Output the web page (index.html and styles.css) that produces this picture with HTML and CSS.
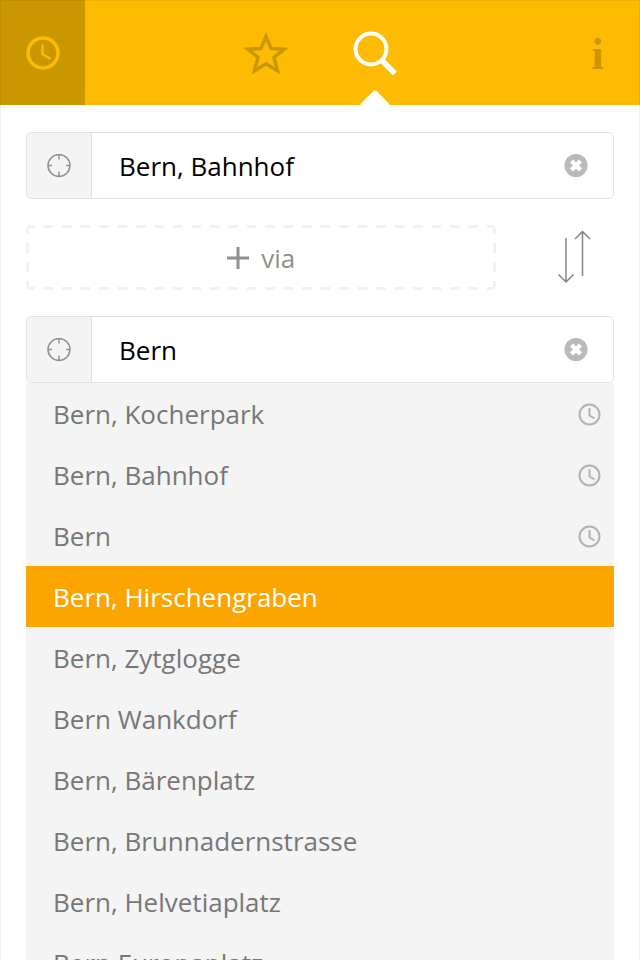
FILE: index.html
```html
<!DOCTYPE html>
<html lang="de">
  <head>
    <meta charset="UTF-8" />
    <meta name="viewport" content="width=device-width, initial-scale=1.0" />
    <title>Fahrplan</title>
    <link rel="stylesheet" href="styles.css">
  </head>
  <body>
    <!-- shared icons -->
    <svg class="sprite" aria-hidden="true">
      <symbol id="locate" viewBox="0 0 24 24">
        <circle cx="12" cy="11.5" r="11" />
        <path d="M12 .5v5M12 17.5v5M1 11.5h4M19 11.5h4" />
      </symbol>
      <symbol id="clear" viewBox="0 0 24 24">
        <circle cx="12" cy="11.5" r="11.5" fill="#b9b9b9" />
        <path d="M7.5 7l9 9M16.5 7l-9 9" stroke="#fff" stroke-width="4.5" />
      </symbol>
      <symbol id="clock" viewBox="0 0 24 24">
        <circle cx="11.5" cy="12.5" r="10" />
        <path d="M11.5 6v7.5l5 3" />
      </symbol>
    </svg>

    <div class="app">
      <nav class="tabs">
        <button class="tab tab-history" type="button" aria-label="Verlauf">
          <svg width="36" height="36" viewBox="0 0 36 36">
            <circle cx="18" cy="18" r="15" stroke-width="3.5" />
            <path d="M17.5 9.5v9.500l8 5" stroke-width="2.5" />
          </svg>
        </button>
        <div class="tabs-main">
          <button class="tab" type="button" aria-label="Favoriten">
            <svg width="46" height="44" viewBox="0 0 46 44">
              <path d="M24 5.500L29 17.5L42 18.2L32 26.3L35.5 39.8L24 32.8L12.500 39.8L16 26.3L6 18.2L19 17.5Z" stroke-width="3.5" />
            </svg>
          </button>
          <button class="tab active" type="button" aria-label="Suche">
            <svg width="44" height="44" viewBox="0 0 44 44">
              <circle cx="18" cy="18" r="15.5" />
              <path d="M28.5 29L42 42.5" stroke-width="5.5" />
            </svg>
          </button>
        </div>
        <button class="tab tab-info" type="button" aria-label="Info">i</button>
      </nav>

      <form class="search">
        <div class="field">
          <button class="locate" type="button" aria-label="Standort als Start">
            <svg class="icon"><use href="#locate" /></svg>
          </button>
          <input type="text" name="from" value="Bern, Bahnhof" aria-label="Von" />
          <button class="clear" type="button" aria-label="Start löschen">
            <svg class="icon"><use href="#clear" /></svg>
          </button>
        </div>

        <div class="via-row">
          <button class="via" type="button">
            <svg width="22" height="22" viewBox="0 0 22 22">
              <path d="M11 0v22M0 11h22" />
            </svg>
            via
          </button>
          <button class="swap" type="button" aria-label="Richtung tauschen">
            <svg width="34" height="54" viewBox="0 0 34 54">
              <path d="M8 7v44M.5 43.5L8 51l7.5-7.5" />
              <path d="M24.5 45V1M17 8L24.5 .5L32 8" />
            </svg>
          </button>
        </div>

        <div class="field">
          <button class="locate" type="button" aria-label="Standort als Ziel">
            <svg class="icon"><use href="#locate" /></svg>
          </button>
          <input type="text" name="to" value="Bern" aria-label="Nach" autocomplete="off" />
          <button class="clear" type="button" aria-label="Ziel löschen">
            <svg class="icon"><use href="#clear" /></svg>
          </button>
        </div>
      </form>

      <ul class="results">
        <li><button type="button">Bern, Kocherpark <svg class="icon"><use href="#clock" /></svg></button></li>
        <li><button type="button">Bern, Bahnhof <svg class="icon"><use href="#clock" /></svg></button></li>
        <li><button type="button">Bern <svg class="icon"><use href="#clock" /></svg></button></li>
        <li><button class="selected" type="button">Bern, Hirschengraben</button></li>
        <li><button type="button">Bern, Zytglogge</button></li>
        <li><button type="button">Bern Wankdorf</button></li>
        <li><button type="button">Bern, Bärenplatz</button></li>
        <li><button type="button">Bern, Brunnadernstrasse</button></li>
        <li><button type="button">Bern, Helvetiaplatz</button></li>
        <li><button type="button">Bern Europaplatz</button></li>
      </ul>
    </div>
  </body>
</html>
```
FILE: styles.css
```css
* {
  box-sizing: border-box;
}
body {
  margin: 0;
  font-family: "Open Sans", "Noto Sans", sans-serif;
  font-size: 26px;
  background: #fff;
}
button,
input {
  margin: 0;
  padding: 0;
  border: none;
  background: none;
  font: inherit;
  color: inherit;
}
button {
  cursor: pointer;
}
svg {
  display: block;
  flex: none;
  fill: none;
  overflow: visible;
}
.sprite {
  position: absolute;
  width: 0;
  height: 0;
}
.icon {
  width: 24px;
  height: 24px;
}
.app {
  position: relative;
  display: flex;
  flex-direction: column;
  height: 100vh;
}
/* hairline frame over everything */
.app::after {
  content: "";
  position: absolute;
  inset: 0;
  border: 1px solid rgba(0, 0, 0, 0.06);
  border-bottom: none;
  pointer-events: none;
}

/* tabs */
.tabs {
  display: grid;
  grid-template-columns: 85px 1fr 85px;
  flex: none;
  height: 105px;
  background: #fdbb04;
  overflow: hidden;
}
.tabs-main {
  display: flex;
  justify-content: center;
}
.tab {
  position: relative;
  display: flex;
  align-items: center;
  justify-content: center;
  color: #c99700;
}
.tab svg {
  stroke: currentColor;
  stroke-width: 4;
}
.tabs-main .tab {
  width: 110px;
}
.tab-history {
  background: #c99700;
  color: #fdbb04;
}
.tab-info {
  padding-top: 4px;
  font-family: "Liberation Serif", serif;
  font-size: 44px;
  font-weight: bold;
}
.tab.active {
  color: #fff;
}
.tab.active::after {
  content: "";
  position: absolute;
  bottom: -11px;
  left: 50%;
  width: 22px;
  height: 22px;
  margin-left: -11px;
  border-radius: 3px;
  background: #fff;
  transform: rotate(45deg);
}

/* search form */
.search {
  display: flex;
  flex-direction: column;
  flex: none;
  gap: 26px;
  padding: 27px 26px 0;
}
.field {
  display: flex;
  height: 67px;
  border: 1px solid #e2e2e2;
  border-radius: 5px;
  overflow: hidden;
}
.locate {
  display: flex;
  align-items: center;
  justify-content: center;
  width: 65px;
  background: #f4f4f4;
  border-right: 1px solid #e2e2e2;
}
.locate svg {
  stroke: #8f8f8f;
  stroke-width: 1.5;
}
.field input {
  flex: 1;
  min-width: 0;
  padding-left: 27px;
  color: #000;
  outline: none;
}
.clear {
  display: flex;
  align-items: center;
  padding: 0 25px;
}
.via-row {
  display: flex;
  justify-content: space-between;
}
/* long dashes, wider apart than a dashed border gives */
.via {
  display: flex;
  align-items: center;
  justify-content: center;
  gap: 12px;
  width: 80%;
  height: 65px;
  border: 4px solid transparent;
  border-radius: 5px;
  color: #8f8f8c;
  background-image:
    linear-gradient(90deg, #f1f1f1 25%, transparent 25% 75%, #f1f1f1 75%),
    linear-gradient(90deg, #f1f1f1 25%, transparent 25% 75%, #f1f1f1 75%),
    linear-gradient(#f1f1f1 25%, transparent 25% 75%, #f1f1f1 75%),
    linear-gradient(#f1f1f1 25%, transparent 25% 75%, #f1f1f1 75%);
  background-size: 4% 3px, 4% 3px, 3px 18px, 3px 18px;
  background-position: 0 -4px, 0 calc(100% + 4px), -4px 0, calc(100% + 4px) 0;
  background-repeat: round no-repeat, round no-repeat, no-repeat round, no-repeat round;
}
.via svg {
  stroke: currentColor;
  stroke-width: 3;
}
.swap {
  display: flex;
  align-items: center;
  padding: 0 22px;
}
.swap svg {
  stroke: #858585;
  stroke-width: 1.5;
}

/* suggestions */
.results {
  flex: 1;
  min-height: 0;
  margin: 0 26px;
  padding: 0;
  list-style: none;
  background: #f4f4f4;
  color: #777;
  overflow-y: auto;
  scrollbar-width: none;
}
.results button {
  display: flex;
  align-items: center;
  justify-content: space-between;
  width: 100%;
  height: 61px;
  padding: 0 12px 0 27px;
}
.results svg {
  stroke: #b3b3b3;
  stroke-width: 2;
}
.results .selected {
  background: #fca400;
  color: #fff;
}
```
